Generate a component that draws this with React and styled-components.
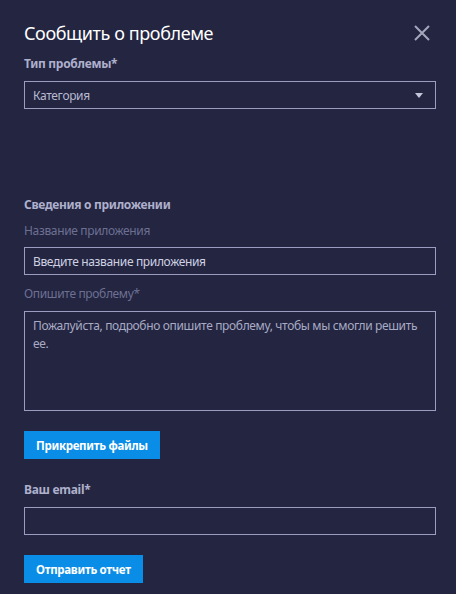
import React from "react";
import styled, { createGlobalStyle } from "styled-components";

const GlobalStyle = createGlobalStyle`
  html, body {
    margin: 0;
    padding: 0;
    background: #232541;
  }
  * {
    box-sizing: border-box;
  }
`;

const Page = styled.div`
  width: 456px;
  height: 594px;
  background: #232541;
  padding: 21px 20px 0 24px;
  font-family: "Noto Sans", "Open Sans", sans-serif;
  display: flex;
  flex-direction: column;
`;

const Header = styled.div`
  display: flex;
  align-items: center;
  justify-content: space-between;
  height: 24px;
`;

const Title = styled.h1`
  margin: 0;
  font-size: 18px;
  line-height: 24px;
  font-weight: 400;
  letter-spacing: -0.4px;
  color: #ffffff;
`;

const CloseButton = styled.button`
  width: 16px;
  height: 16px;
  padding: 0;
  margin-right: 6px;
  border: none;
  background: transparent;
  display: flex;
  align-items: center;
  justify-content: center;
  cursor: pointer;
`;

const Label = styled.div`
  margin-top: ${(p) => p.$mt}px;
  font-size: 12px;
  line-height: 16px;
  font-weight: ${(p) => (p.$bold ? 700 : 400)};
  letter-spacing: ${(p) => (p.$bold ? "-0.3px" : "-0.35px")};
  color: ${(p) => (p.$bold ? "#aeb0cc" : "#6d7092")};
`;

const Field = styled.div`
  margin-top: ${(p) => p.$mt}px;
  width: 412px;
  height: ${(p) => p.$h || 28}px;
  border: 1px solid #9a9dbf;
  display: flex;
  align-items: center;
  justify-content: space-between;
  padding: 0 12px 0 8px;
`;

const SelectText = styled.span`
  font-size: 12px;
  letter-spacing: -0.35px;
  color: #b8bad0;
`;

const Input = styled.input`
  width: 100%;
  border: none;
  outline: none;
  background: transparent;
  font-family: inherit;
  font-size: 12px;
  letter-spacing: -0.35px;
  color: #ffffff;
  padding: 0;
  &::placeholder {
    color: #cfd1e2;
    opacity: 1;
  }
`;

const TextArea = styled.textarea`
  margin-top: 9px;
  width: 412px;
  height: 100px;
  border: 1px solid #9a9dbf;
  background: transparent;
  outline: none;
  resize: none;
  padding: 5px 8px;
  font-family: inherit;
  font-size: 12px;
  line-height: 18px;
  letter-spacing: -0.35px;
  color: #ffffff;
  &::placeholder {
    color: #a9abc4;
    opacity: 1;
  }
`;

const Button = styled.button`
  margin-top: 20px;
  align-self: flex-start;
  height: 28px;
  padding: 0 12px;
  border: none;
  background: #0a8de6;
  color: #ffffff;
  font-family: inherit;
  font-size: 11.5px;
  font-weight: 700;
  letter-spacing: -0.3px;
  cursor: pointer;
`;

const Arrow = () => (
  <svg width="8" height="5" viewBox="0 0 8 5">
    <path d="M0 0 H8 L4 5 Z" fill="#c3c5da" />
  </svg>
);

const CloseIcon = () => (
  <svg width="16" height="16" viewBox="0 0 16 16">
    <path
      d="M1 1 L15 15 M15 1 L1 15"
      stroke="#a3a6bd"
      strokeWidth="2"
      fill="none"
    />
  </svg>
);

export default function App() {
  return (
    <>
      <GlobalStyle />
      <Page>
        <Header>
          <Title>Сообщить о проблеме</Title>
          <CloseButton aria-label="Закрыть">
            <CloseIcon />
          </CloseButton>
        </Header>

        <Label $bold $mt={11}>Тип проблемы*</Label>
        <Field $mt={9}>
          <SelectText>Категория</SelectText>
          <Arrow />
        </Field>

        <Label $bold $mt={88}>Сведения о приложении</Label>
        <Label $mt={10}>Название приложения</Label>
        <Field $mt={8}>
          <Input placeholder="Введите название приложения" />
        </Field>

        <Label $mt={11}>Опишите проблему*</Label>
        <TextArea placeholder="Пожалуйста, подробно опишите проблему, чтобы мы смогли решить ее." />

        <Button>Прикрепить файлы</Button>

        <Label $bold $mt={23}>Ваш email*</Label>
        <Field $mt={9}>
          <Input />
        </Field>

        <Button>Отправить отчет</Button>
      </Page>
    </>
  );
}
